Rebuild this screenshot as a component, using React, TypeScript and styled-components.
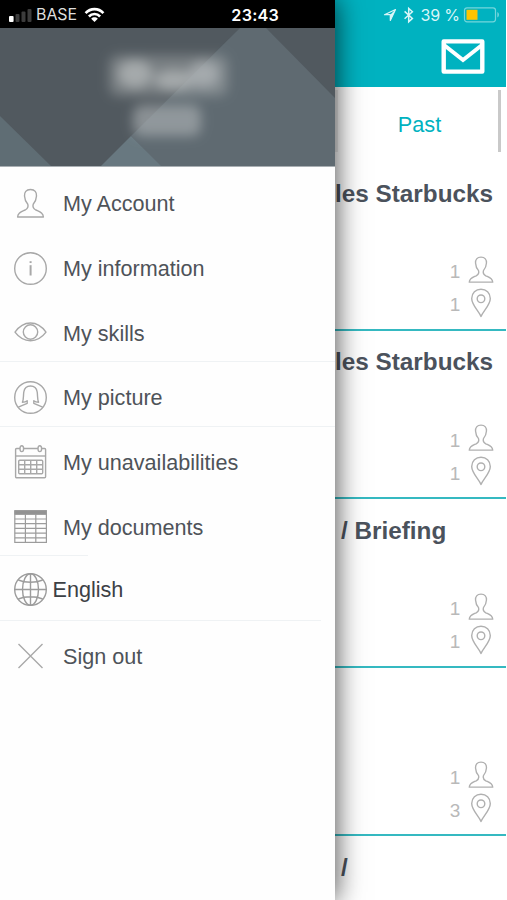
import React from 'react';
import styled, { createGlobalStyle } from 'styled-components';

const GlobalStyle = createGlobalStyle`
  *, *::before, *::after { box-sizing: border-box; }
  body { margin: 0; background: #fff; font-family: "Liberation Sans", Arial, sans-serif; color: #4b525c; }
  svg { display: block; flex: none; }
`;

const TEAL = '#00b2c0';

const Screen = styled.div`
  width: 507px;
  height: 900px;
  display: grid;
  grid-template-columns: 335px 171px;
  overflow: hidden;
  background: #fff;
`;

const Drawer = styled.aside`
  position: relative;
  z-index: 1;
  height: 900px;
  display: flex;
  flex-direction: column;
  background: #fefefe;
  box-shadow: 0 0 26px 1px rgba(0, 0, 0, 0.7);
`;

const DrawerStatus = styled.div`
  height: 28px;
  flex: none;
  display: grid;
  grid-template-columns: 36px 48px 1fr auto;
  align-items: center;
  padding: 2px 56px 0 0;
  background: #000;
  color: #fff;
  font-family: Inter, sans-serif;
`;

const Carrier = styled.span`
  font-size: 15.9px;
  line-height: 20px;
  color: #dedede;
`;

const Clock = styled.span`
  font-size: 16.2px;
  line-height: 20px;
  font-weight: 600;
  letter-spacing: 0.2px;
  white-space: nowrap;
`;

const Banner = styled.header`
  height: 139px;
  flex: none;
  border-bottom: 1px solid #a9afb3;
`;

const Menu = styled.nav`
  display: flex;
  flex-direction: column;
  padding-top: 1px;
`;

const Item = styled.div<{ $tight?: boolean }>`
  height: 64.7px;
  display: flex;
  align-items: center;
  padding-left: 13px;
  padding-top: ${(p) => (p.$tight ? '3px' : '6px')};
  gap: ${(p) => (p.$tight ? '4.5px' : '15px')};
`;

const Label = styled.span<{ $dark?: boolean }>`
  font-size: 21.6px;
  line-height: 26px;
  padding-top: ${(p) => (p.$dark ? '1px' : '2px')};
  white-space: nowrap;
  color: ${(p) => (p.$dark ? '#3c4045' : '#4e5359')};
`;

const Rule = styled.div<{ $w: number }>`
  height: 1px;
  margin-top: -1px;
  width: ${(p) => p.$w}px;
  background: #eff2f4;
`;

const Page = styled.main`
  height: 900px;
  display: flex;
  flex-direction: column;
  overflow: hidden;
`;

const TopBar = styled.div`
  height: 87px;
  flex: none;
  background: ${TEAL};
  display: flex;
  flex-direction: column;
  align-items: flex-end;
`;

const PhoneStatus = styled.div`
  height: 29px;
  display: flex;
  align-items: center;
  padding: 1px 6px 0 0;
  color: #d9f6f8;
  font-family: Inter, sans-serif;
`;

const Battery = styled.span`
  font-size: 16px;
  line-height: 20px;
  margin: 0 3px 1px 5px;
  white-space: nowrap;
  word-spacing: -0.5px;
`;

const MailButton = styled.div`
  margin: 9.5px 21px 0 0;
`;

const Tab = styled.div`
  height: 62px;
  width: 166px;
  margin-top: 3px;
  flex: none;
  display: flex;
  align-items: center;
  justify-content: center;
  padding: 7px 0 0 3px;
  border-right: 3px solid #c9c9c9;
  border-left: 3px solid #ececec;
  color: ${TEAL};
  font-size: 21.7px;
`;

const Cards = styled.div`
  margin-top: 10px;
  display: flex;
  flex-direction: column;
`;

const Card = styled.section`
  height: 168.5px;
  flex: none;
  border-bottom: 2px solid #35b9c1;
  display: flex;
  flex-direction: column;
  justify-content: space-between;
  padding: 17.5px 12px 11px 0;

  &:last-child {
    height: 65px;
    border-bottom: none;
  }
`;

const Title = styled.h2<{ $indent?: boolean }>`
  margin: 0;
  height: 28px;
  padding-left: ${(p) => (p.$indent ? '6px' : '0')};
  font-size: 24.3px;
  line-height: 28px;
  white-space: nowrap;
`;

const Counts = styled.div`
  display: grid;
  grid-template-columns: 12px 26px;
  column-gap: 7px;
  row-gap: 4px;
  justify-content: end;
  align-items: center;
  justify-items: center;
  color: #b9b9b9;
  font-size: 19px;
  line-height: 22px;
`;

const Count = styled.span`
  padding-top: 5px;
`;

const Stroke = ({ children, size = 35, color = '#a8a8a8' }: { children: React.ReactNode; size?: number; color?: string }) => (
  <svg width={size} height={size} viewBox="0 0 35 35" fill="none" stroke={color} strokeWidth="1.4" strokeLinejoin="round">
    {children}
  </svg>
);

const personPath =
  'M17.5 3.5 C13 3.5 11.3 6.3 11.5 10 C11.7 14 13 16.2 14.8 18.3 C15.6 21 14.8 22.6 12.2 24 C8.4 25.8 4.8 26.7 4.6 31 H30.4 C30.2 26.7 26.6 25.8 22.8 24 C20.2 22.6 19.4 21 20.2 18.3 C22 16.2 23.3 14 23.5 10 C23.7 6.3 22 3.5 17.5 3.5 Z';

const AccountIcon = () => <Stroke><path d={personPath} /></Stroke>;

const InfoIcon = () => (
  <Stroke>
    <circle cx="17.5" cy="17.5" r="15.8" />
    <path d="M17.6 14.2V24.5" strokeWidth="2" />
    <path d="M17.6 10.2V12" strokeWidth="2" />
  </Stroke>
);

const EyeIcon = () => (
  <Stroke>
    <path d="M2 17.2 C10.5 4.9 24.5 4.9 33 17.2 C24.5 28.6 10.5 28.6 2 17.2 Z" />
    <circle cx="17.5" cy="17" r="7.2" />
  </Stroke>
);

const PictureIcon = () => (
  <Stroke>
    <circle cx="17.5" cy="17.5" r="15.8" />
    <path d="M5.3 27.2 L14.2 23.3 V20.7 C12.8 21.9 11 22.2 9.4 22.2 C10.8 19.5 10.2 16 10.8 12 C11.5 7.6 13.7 6 17.5 6 C21.3 6 23.5 7.6 24.2 12 C24.8 16 24.2 19.5 25.6 22.2 C24 22.2 22.2 21.9 20.8 20.7 V23.3 L29.7 27.2" />
  </Stroke>
);

const CalendarIcon = () => (
  <Stroke>
    <g transform="translate(0 -1.2)">
      <rect x="2.6" y="4.7" width="30" height="29.3" rx="1" />
      <path d="M2.6 12.2H32.6" />
      <ellipse cx="8.8" cy="4.9" rx="1.8" ry="2.9" fill="#fefefe" />
      <ellipse cx="26.8" cy="4.9" rx="1.8" ry="2.9" fill="#fefefe" />
      <rect x="5.7" y="16.5" width="24" height="13.5" rx="1" />
      <path d="M5.7 21H29.7M5.7 25.5H29.7M11.7 16.5V30M17.7 16.5V30M23.7 16.5V30" />
    </g>
  </Stroke>
);

const TableIcon = () => (
  <Stroke color="#9c9c9c">
    <rect x="1.8" y="1.8" width="31.6" height="31.6" strokeWidth="1.2" strokeLinejoin="miter" />
    <rect x="1.8" y="1.6" width="31.6" height="3.8" fill="#929292" strokeWidth="1" />
    <path d="M1.8 10H33.4M1.8 14.7H33.4M1.8 19.4H33.4M1.8 24.1H33.4M1.8 28.8H33.4M12.4 5V33.4M22.8 5V33.4" strokeWidth="1.2" />
  </Stroke>
);

const GlobeIcon = () => (
  <Stroke color="#9c9c9c">
    <circle cx="17.5" cy="17.5" r="15.8" />
    <ellipse cx="17.5" cy="17.5" rx="8" ry="15.8" />
    <path d="M17.5 1.7V33.3M1.7 17.5H33.3M5.3 8 C12 11 23 11 29.7 8M5.3 27 C12 24 23 24 29.7 27" />
  </Stroke>
);

const CloseIcon = () => (
  <Stroke><path d="M5.5 5L29.5 29M29.5 5L5.5 29" /></Stroke>
);

const PersonSmall = () => (
  <svg width="26" height="28" viewBox="3.2 2.5 28.6 30.2" fill="none" stroke="#b0b0b0" strokeWidth="1.5" strokeLinejoin="round">
    <path d={personPath} />
  </svg>
);

const PinIcon = () => (
  <svg width="22" height="30" viewBox="0 0 22 30" fill="none" stroke="#b0b0b0" strokeWidth="1.4" strokeLinejoin="round">
    <path d="M11 28.5 C9 23.5 1.7 17 1.7 10.5 C1.7 5 5.8 1.2 11 1.2 C16.2 1.2 20.3 5 20.3 10.5 C20.3 17 13 23.5 11 28.5 Z" />
    <circle cx="11" cy="10.8" r="3.8" />
  </svg>
);

const SignalIcon = () => (
  <svg width="36" height="20" viewBox="0 0 36 20">
    <rect x="9" y="11" width="4.6" height="6" rx="1" fill="#fff" />
    <rect x="15.5" y="9" width="4" height="8" rx="1" fill="#3c3c3c" />
    <rect x="21.5" y="6.5" width="4" height="10.5" rx="1" fill="#3c3c3c" />
    <rect x="27.5" y="4" width="4" height="13" rx="1" fill="#3c3c3c" />
  </svg>
);

const WifiIcon = () => (
  <svg width="21" height="16" viewBox="0 0 21 16" fill="none" stroke="#fff" strokeWidth="2.6">
    <path d="M1.6 6.2 C6.5 .8 14.5 .8 19.4 6.2" />
    <path d="M4.9 9.5 C8 6.2 13 6.2 16.1 9.5" />
    <path d="M7.2 11.7 C9 9.9 12 9.9 13.8 11.7 L10.5 15 Z" fill="#fff" stroke="none" />
  </svg>
);

const BannerArt = () => (
  <svg width="335" height="138" viewBox="0 28 335 138">
    <defs>
      <filter id="soft" x="-30%" y="-60%" width="160%" height="220%"><feGaussianBlur stdDeviation="6" /></filter>
    </defs>
    <rect y="28" width="335" height="138" fill="#51595f" />
    <path d="M0 116L51 166H0Z" fill="#5f6d74" />
    <path d="M240 28H266L335 98V166H160L131 136Z" fill="#5f6a71" />
    <path d="M131 136L161 166H101Z" fill="#687880" />
    <g filter="url(#soft)" fill="#b4b8ba">
      <rect x="109" y="55" width="119" height="41" rx="9" opacity=".4" />
      <ellipse cx="135" cy="74" rx="17" ry="14" opacity=".75" />
      <ellipse cx="174" cy="80" rx="20" ry="10" opacity=".75" />
      <ellipse cx="204" cy="74" rx="15" ry="13" opacity=".7" />
      <rect x="133" y="105" width="68" height="31" rx="9" opacity=".58" />
    </g>
  </svg>
);

const items = [
  { label: 'My Account', icon: <AccountIcon /> },
  { label: 'My information', icon: <InfoIcon /> },
  { label: 'My skills', icon: <EyeIcon />, rule: 335 },
  { label: 'My picture', icon: <PictureIcon />, rule: 335 },
  { label: 'My unavailabilities', icon: <CalendarIcon /> },
  { label: 'My documents', icon: <TableIcon />, rule: 88 },
  { label: 'English', icon: <GlobeIcon />, rule: 321, tight: true },
  { label: 'Sign out', icon: <CloseIcon /> },
];

const cards = [
  { title: 'les Starbucks', people: 1, places: 1 },
  { title: 'les Starbucks', people: 1, places: 1 },
  { title: '/ Briefing', people: 1, places: 1, indent: true },
  { title: '', people: 1, places: 3 },
  { title: '/', indent: true },
];

export default function App() {
  return (
    <Screen>
      <GlobalStyle />
      <Drawer>
        <DrawerStatus>
          <SignalIcon />
          <Carrier>BASE</Carrier>
          <WifiIcon />
          <Clock>23:43</Clock>
        </DrawerStatus>
        <Banner><BannerArt /></Banner>
        <Menu>
          {items.map((it) => (
            <React.Fragment key={it.label}>
              <Item $tight={it.tight}>
                {it.icon}
                <Label $dark={it.tight}>{it.label}</Label>
              </Item>
              {it.rule && <Rule $w={it.rule} />}
            </React.Fragment>
          ))}
        </Menu>
      </Drawer>
      <Page>
        <TopBar>
          <PhoneStatus>
            <svg width="35" height="18" viewBox="0 0 35 18" fill="none" stroke="#d9f6f8">
              <path d="M4.5 8.7L15.5 3.5L10.3 14.5V8.7Z" strokeWidth="1.2" strokeLinejoin="round" />
              <path d="M10.3 8.7L15.5 3.5L10.3 14.5Z" fill="#d9f6f8" stroke="none" />
              <path d="M24.6 5.4L32.4 12.4L28.7 15.8V2.4L32.4 5.8L24.6 12.8" strokeWidth="1.5" />
            </svg>
            <Battery>39 %</Battery>
            <svg width="37" height="18" viewBox="0 0 37 18">
              <rect x="1.5" y="1.8" width="31" height="14" rx="2.5" fill="none" stroke="#74d6dc" strokeWidth="1.2" />
              <rect x="3.5" y="3.8" width="11" height="10" fill="#ffc400" />
              <path d="M34.3 6V11.5Q36 11 36 8.8T34.3 6Z" fill="#74d6dc" />
            </svg>
          </PhoneStatus>
          <MailButton>
            <svg width="44" height="35" viewBox="0 0 44 35" fill="none" stroke="#fff" strokeWidth="4.4" strokeLinejoin="round">
              <rect x="2.7" y="2.4" width="38.6" height="30.2" />
              <path d="M3 6L22 21L41 6" strokeWidth="4" strokeLinejoin="miter" />
            </svg>
          </MailButton>
        </TopBar>
        <Tab>Past</Tab>
        <Cards>
          {cards.map((c, i) => (
            <Card key={i}>
              <Title $indent={c.indent}>{c.title}</Title>
              {c.people && (
                <Counts>
                  <Count>{c.people}</Count>
                  <PersonSmall />
                  <Count>{c.places}</Count>
                  <PinIcon />
                </Counts>
              )}
            </Card>
          ))}
        </Cards>
      </Page>
    </Screen>
  );
}
